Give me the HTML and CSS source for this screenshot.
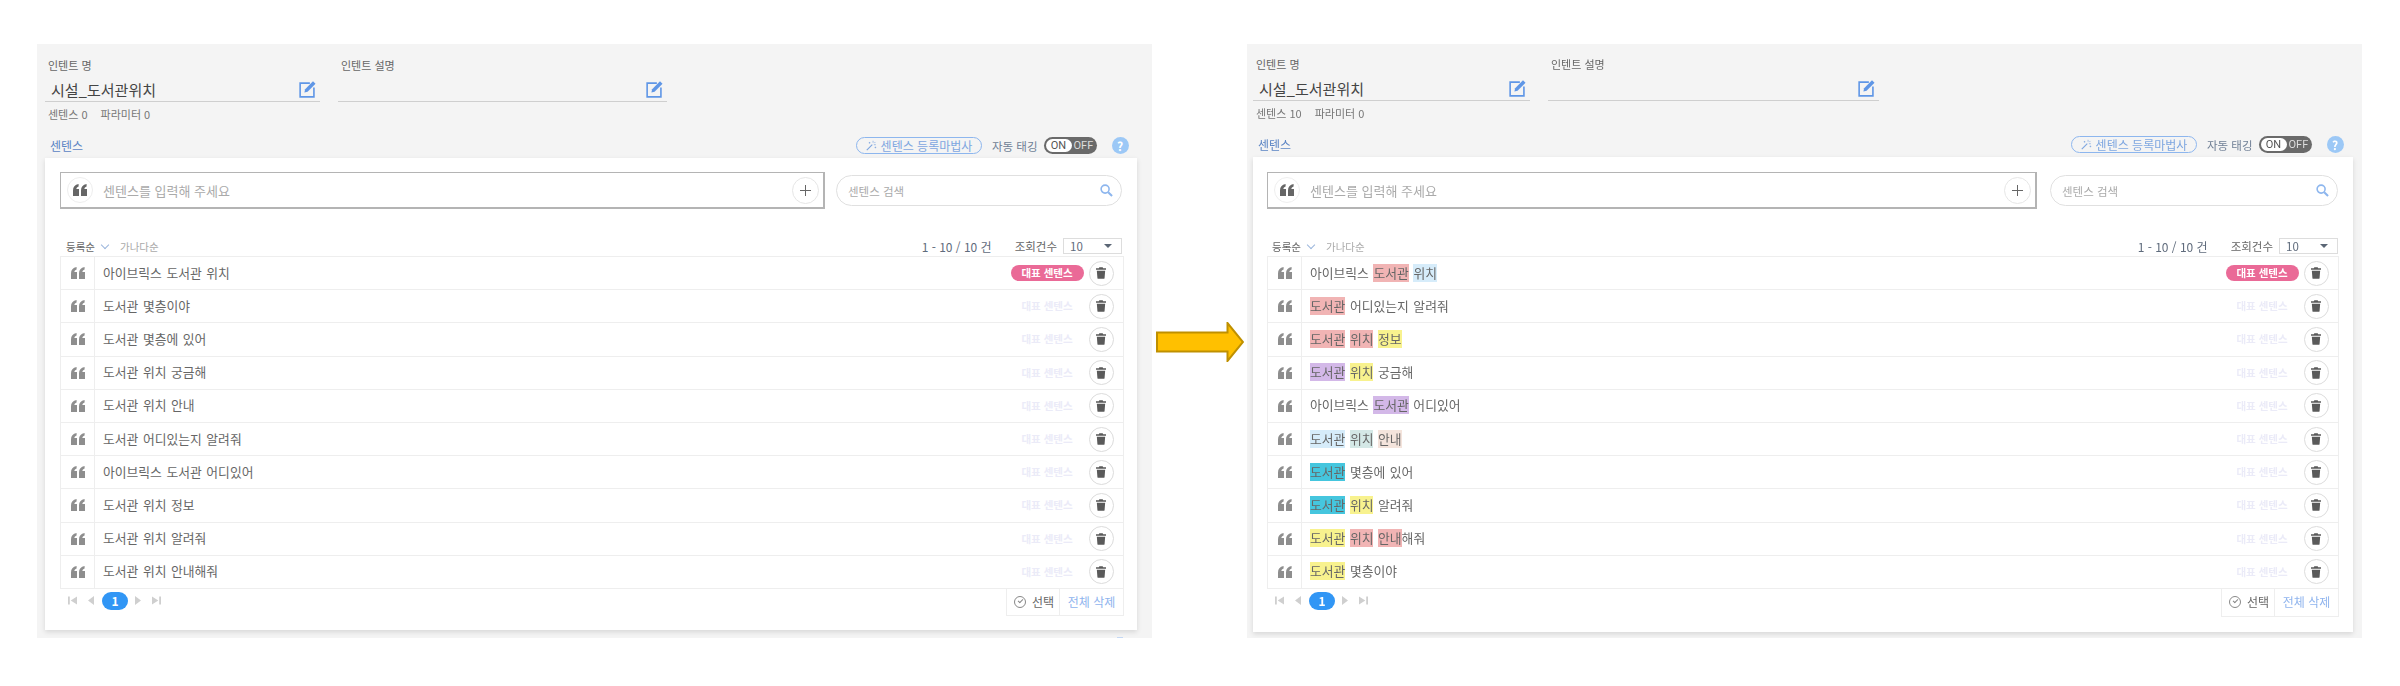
FILE: index.html
```html
<!DOCTYPE html>
<html lang="ko">
<head>
  <meta charset="UTF-8" />
  <title>인텐트 - 센텐스 태깅</title>
  <link rel="stylesheet" href="styles.css">
</head>
<body>
  <svg class="sprite" xmlns="http://www.w3.org/2000/svg">
    <symbol id="i-quote" viewBox="0 0 14 12"><path d="M0 12V6.500C0 3 1.800.8 5.600 0v2.600C4.200 3 3.500 3.900 3.400 5H6v7zM8 12V6.500C8 3 9.800.8 13.600 0v2.600c-1.400.4-2.100 1.300-2.200 2.400H14v7z"/></symbol>
    <symbol id="i-trash" viewBox="0 0 12 14"><path d="M4 0h4l.6 1.300H12v1.800H0V1.300h3.400zM1 4.200h10l-.7 8.700c0 .6-.5 1.100-1.100 1.100H2.800c-.6 0-1.100-.5-1.100-1.100z"/></symbol>
    <symbol id="i-edit" viewBox="0 0 18 18"><path d="M11.500 2.200H1.200v14.600h14.600V7" fill="none" stroke="currentColor" stroke-width="1.700"/><path d="M14.800.3l2.700 2.600-8.400 8.500-3.400.8.800-3.400z"/></symbol>
    <symbol id="i-first" viewBox="0 0 10 9"><path d="M0 0h2v9H0zM10 0v9L3 4.500z"/></symbol>
    <symbol id="i-prev" viewBox="0 0 6 9"><path d="M6 0v9L0 4.500z"/></symbol>
    <symbol id="i-search" viewBox="0 0 14 14"><circle cx="5.500" cy="5.500" r="4.300" fill="none" stroke="currentColor" stroke-width="1.700"/><path d="M8.800 8.800L13 13" stroke="currentColor" stroke-width="2.200" fill="none"/></symbol>
    <symbol id="i-wand" viewBox="0 0 14 14"><path d="M1 13L8 6" stroke="currentColor" stroke-width="1.400" fill="none"/><path d="M9 1v2.500M12.500 6H10M12 2.500L10.500 4M3.500 3.500h2M4.500 2.500v2M11 9.500h2M12 8.500v2" stroke="currentColor" stroke-width=".9" fill="none"/></symbol>
  </svg>

  <div class="page">
    <section class="panel panel-before">
      <div class="fields">
        <div class="field field-name">
          <label class="field-label">인텐트 명</label>
          <div class="field-line">
            <span class="field-value">시설_도서관위치</span>
            <svg class="edit-icon"><use href="#i-edit"/></svg>
          </div>
        </div>
        <div class="field field-desc">
          <label class="field-label">인텐트 설명</label>
          <div class="field-line">
            <span class="field-value"></span>
            <svg class="edit-icon"><use href="#i-edit"/></svg>
          </div>
        </div>
      </div>
      <div class="stats"><span>센텐스 0</span><span>파라미터 0</span></div>
      <div class="section-head">
        <h2>센텐스</h2>
        <div class="section-tools">
          <button class="wizard"><svg><use href="#i-wand"/></svg>센텐스 등록마법사</button>
          <span class="auto-label">자동 태깅</span>
          <span class="toggle"><b>ON</b><i>OFF</i></span>
          <span class="help">?</span>
        </div>
      </div>
      <div class="card">
        <div class="entry-row">
          <div class="entry">
            <span class="round round-quote"><svg><use href="#i-quote"/></svg></span>
            <span class="entry-text">센텐스를 입력해 주세요</span>
            <span class="round round-plus"></span>
          </div>
          <div class="search">
            <span>센텐스 검색</span>
            <svg><use href="#i-search"/></svg>
          </div>
        </div>
        <div class="list-tools">
          <div class="sort">
            <span class="sort-on">등록순</span><span class="chevron"></span><span class="sort-off">가나다순</span>
          </div>
          <div class="counts">
            <span class="count-range">1 - 10 / 10 건</span>
            <span class="count-label">조회건수</span>
            <span class="select">10<span class="caret"></span></span>
          </div>
        </div>
        <ul class="rows">
          <li class="row"><span class="row-icon"><svg><use href="#i-quote"/></svg></span><span class="row-text">아이브릭스 도서관 위치</span><span class="tag tag-on">대표 센텐스</span><span class="round round-trash"><svg><use href="#i-trash"/></svg></span></li>
          <li class="row"><span class="row-icon"><svg><use href="#i-quote"/></svg></span><span class="row-text">도서관 몇층이야</span><span class="tag">대표 센텐스</span><span class="round round-trash"><svg><use href="#i-trash"/></svg></span></li>
          <li class="row"><span class="row-icon"><svg><use href="#i-quote"/></svg></span><span class="row-text">도서관 몇층에 있어</span><span class="tag">대표 센텐스</span><span class="round round-trash"><svg><use href="#i-trash"/></svg></span></li>
          <li class="row"><span class="row-icon"><svg><use href="#i-quote"/></svg></span><span class="row-text">도서관 위치 궁금해</span><span class="tag">대표 센텐스</span><span class="round round-trash"><svg><use href="#i-trash"/></svg></span></li>
          <li class="row"><span class="row-icon"><svg><use href="#i-quote"/></svg></span><span class="row-text">도서관 위치 안내</span><span class="tag">대표 센텐스</span><span class="round round-trash"><svg><use href="#i-trash"/></svg></span></li>
          <li class="row"><span class="row-icon"><svg><use href="#i-quote"/></svg></span><span class="row-text">도서관 어디있는지 알려줘</span><span class="tag">대표 센텐스</span><span class="round round-trash"><svg><use href="#i-trash"/></svg></span></li>
          <li class="row"><span class="row-icon"><svg><use href="#i-quote"/></svg></span><span class="row-text">아이브릭스 도서관 어디있어</span><span class="tag">대표 센텐스</span><span class="round round-trash"><svg><use href="#i-trash"/></svg></span></li>
          <li class="row"><span class="row-icon"><svg><use href="#i-quote"/></svg></span><span class="row-text">도서관 위치 정보</span><span class="tag">대표 센텐스</span><span class="round round-trash"><svg><use href="#i-trash"/></svg></span></li>
          <li class="row"><span class="row-icon"><svg><use href="#i-quote"/></svg></span><span class="row-text">도서관 위치 알려줘</span><span class="tag">대표 센텐스</span><span class="round round-trash"><svg><use href="#i-trash"/></svg></span></li>
          <li class="row"><span class="row-icon"><svg><use href="#i-quote"/></svg></span><span class="row-text">도서관 위치 안내해줘</span><span class="tag">대표 센텐스</span><span class="round round-trash"><svg><use href="#i-trash"/></svg></span></li>
        </ul>
        <div class="list-foot">
          <div class="pager">
            <svg class="pg-end"><use href="#i-first"/></svg>
            <svg class="pg-step"><use href="#i-prev"/></svg>
            <span class="pg-num">1</span>
            <svg class="pg-step flip"><use href="#i-prev"/></svg>
            <svg class="pg-end flip"><use href="#i-first"/></svg>
          </div>
          <div class="foot-btns">
            <span class="foot-select"><span class="check"></span>선택</span>
            <span class="foot-delete">전체 삭제</span>
          </div>
        </div>
      </div>
      <span class="stray-mark"></span>
    </section>

    <div class="arrow-slot">
      <svg class="arrow" viewBox="0 0 88 40"><path d="M1 10.500H71.500V1L87 20 71.500 39V29.500H1z"/></svg>
    </div>

    <section class="panel panel-after">
      <div class="fields">
        <div class="field field-name">
          <label class="field-label">인텐트 명</label>
          <div class="field-line">
            <span class="field-value">시설_도서관위치</span>
            <svg class="edit-icon"><use href="#i-edit"/></svg>
          </div>
        </div>
        <div class="field field-desc">
          <label class="field-label">인텐트 설명</label>
          <div class="field-line">
            <span class="field-value"></span>
            <svg class="edit-icon"><use href="#i-edit"/></svg>
          </div>
        </div>
      </div>
      <div class="stats"><span>센텐스 10</span><span>파라미터 0</span></div>
      <div class="section-head">
        <h2>센텐스</h2>
        <div class="section-tools">
          <button class="wizard"><svg><use href="#i-wand"/></svg>센텐스 등록마법사</button>
          <span class="auto-label">자동 태깅</span>
          <span class="toggle"><b>ON</b><i>OFF</i></span>
          <span class="help">?</span>
        </div>
      </div>
      <div class="card">
        <div class="entry-row">
          <div class="entry">
            <span class="round round-quote"><svg><use href="#i-quote"/></svg></span>
            <span class="entry-text">센텐스를 입력해 주세요</span>
            <span class="round round-plus"></span>
          </div>
          <div class="search">
            <span>센텐스 검색</span>
            <svg><use href="#i-search"/></svg>
          </div>
        </div>
        <div class="list-tools">
          <div class="sort">
            <span class="sort-on">등록순</span><span class="chevron"></span><span class="sort-off">가나다순</span>
          </div>
          <div class="counts">
            <span class="count-range">1 - 10 / 10 건</span>
            <span class="count-label">조회건수</span>
            <span class="select">10<span class="caret"></span></span>
          </div>
        </div>
        <ul class="rows">
          <li class="row"><span class="row-icon"><svg><use href="#i-quote"/></svg></span><span class="row-text">아이브릭스 <mark class="hl-red">도서관</mark> <mark class="hl-sky">위치</mark></span><span class="tag tag-on">대표 센텐스</span><span class="round round-trash"><svg><use href="#i-trash"/></svg></span></li>
          <li class="row"><span class="row-icon"><svg><use href="#i-quote"/></svg></span><span class="row-text"><mark class="hl-red">도서관</mark> 어디있는지 알려줘</span><span class="tag">대표 센텐스</span><span class="round round-trash"><svg><use href="#i-trash"/></svg></span></li>
          <li class="row"><span class="row-icon"><svg><use href="#i-quote"/></svg></span><span class="row-text"><mark class="hl-red">도서관</mark> <mark class="hl-red">위치</mark> <mark class="hl-yellow">정보</mark></span><span class="tag">대표 센텐스</span><span class="round round-trash"><svg><use href="#i-trash"/></svg></span></li>
          <li class="row"><span class="row-icon"><svg><use href="#i-quote"/></svg></span><span class="row-text"><mark class="hl-purple">도서관</mark> <mark class="hl-yellow">위치</mark> 궁금해</span><span class="tag">대표 센텐스</span><span class="round round-trash"><svg><use href="#i-trash"/></svg></span></li>
          <li class="row"><span class="row-icon"><svg><use href="#i-quote"/></svg></span><span class="row-text">아이브릭스 <mark class="hl-purple">도서관</mark> 어디있어</span><span class="tag">대표 센텐스</span><span class="round round-trash"><svg><use href="#i-trash"/></svg></span></li>
          <li class="row"><span class="row-icon"><svg><use href="#i-quote"/></svg></span><span class="row-text"><mark class="hl-sky">도서관</mark> <mark class="hl-sage">위치</mark> <mark class="hl-beige">안내</mark></span><span class="tag">대표 센텐스</span><span class="round round-trash"><svg><use href="#i-trash"/></svg></span></li>
          <li class="row"><span class="row-icon"><svg><use href="#i-quote"/></svg></span><span class="row-text"><mark class="hl-cyan">도서관</mark> 몇층에 있어</span><span class="tag">대표 센텐스</span><span class="round round-trash"><svg><use href="#i-trash"/></svg></span></li>
          <li class="row"><span class="row-icon"><svg><use href="#i-quote"/></svg></span><span class="row-text"><mark class="hl-cyan">도서관</mark> <mark class="hl-yellow">위치</mark> 알려줘</span><span class="tag">대표 센텐스</span><span class="round round-trash"><svg><use href="#i-trash"/></svg></span></li>
          <li class="row"><span class="row-icon"><svg><use href="#i-quote"/></svg></span><span class="row-text"><mark class="hl-yellow">도서관</mark> <mark class="hl-red">위치</mark> <mark class="hl-red">안내</mark>해줘</span><span class="tag">대표 센텐스</span><span class="round round-trash"><svg><use href="#i-trash"/></svg></span></li>
          <li class="row"><span class="row-icon"><svg><use href="#i-quote"/></svg></span><span class="row-text"><mark class="hl-yellow">도서관</mark> 몇층이야</span><span class="tag">대표 센텐스</span><span class="round round-trash"><svg><use href="#i-trash"/></svg></span></li>
        </ul>
        <div class="list-foot">
          <div class="pager">
            <svg class="pg-end"><use href="#i-first"/></svg>
            <svg class="pg-step"><use href="#i-prev"/></svg>
            <span class="pg-num">1</span>
            <svg class="pg-step flip"><use href="#i-prev"/></svg>
            <svg class="pg-end flip"><use href="#i-first"/></svg>
          </div>
          <div class="foot-btns">
            <span class="foot-select"><span class="check"></span>선택</span>
            <span class="foot-delete">전체 삭제</span>
          </div>
        </div>
      </div>
    </section>
  </div>
</body>
</html>
```

FILE: styles.css
```css
/* Reset and base */
*, *::before, *::after {
  box-sizing: border-box;
}

body {
  font-family: "Noto Sans CJK KR", "Noto Sans", sans-serif;
  background-color: #ffffff;
  color: #666666;
  margin: 0;
  overflow: hidden;
}

.sprite {
  display: none;
}

.page {
  display: flex;
  align-items: flex-start;
  padding: 44px 0 0 37px;
  filter: blur(0.35px);
}

/* Panels */
.panel {
  position: relative;
  flex-shrink: 0;
  width: 1115px;
  height: 594px;
  background-color: #f4f4f4;
}

.panel-before {
  padding: 14px 15px 8px 8px;
}

.panel-after {
  padding: 13px 9px 6px 6px;
}

.arrow-slot {
  flex-shrink: 0;
  width: 95px;
  padding: 278px 0 0 4px;
}

.arrow {
  display: block;
  width: 88px;
  height: 40px;
  fill: #ffc000;
  stroke: #bf9000;
  stroke-width: 2;
}

.stray-mark {
  position: absolute;
  left: 1080px;
  bottom: 0;
  width: 6px;
  height: 1px;
  background-color: #c4d8f4;
}

/* Intent fields */
.fields {
  display: flex;
  gap: 18px;
}

.field-name {
  width: 275px;
}

.field-desc {
  width: 329px;
}

.panel-after .field-name {
  width: 277px;
}

.panel-after .field-desc {
  width: 331px;
}

.field-label {
  display: block;
  padding-left: 3px;
  font-size: 11px;
  line-height: 14px;
  color: #666;
}

.field-line {
  display: flex;
  justify-content: space-between;
  align-items: center;
  height: 24px;
  margin-top: 6px;
  padding: 0 4px 0 6px;
  border-bottom: 1px solid #cfcfcf;
}

.field-value {
  font-size: 15px;
  color: #444;
}

.edit-icon {
  width: 17px;
  height: 17px;
  color: #5f96e6;
  fill: #5f96e6;
}

.stats {
  display: flex;
  gap: 13px;
  margin-top: 5px;
  padding-left: 3px;
  font-size: 11px;
  line-height: 14px;
  color: #777;
}

/* Section head */
.section-head {
  display: flex;
  justify-content: space-between;
  align-items: flex-end;
  height: 17px;
  margin: 16px 0 4px;
  padding: 0 8.500px 0 5px;
}

.panel-after .section-head {
  padding-right: 9.500px;
}

.section-head h2 {
  margin: 0;
  font-size: 12px;
  font-weight: 400;
  line-height: 17px;
  color: #5b84c4;
}

.section-tools {
  display: flex;
  align-items: center;
  height: 17px;
}

.wizard {
  display: flex;
  align-items: center;
  justify-content: center;
  gap: 4px;
  width: 126px;
  height: 17px;
  padding: 0;
  border: 1px solid #8db6ee;
  border-radius: 9px;
  background-color: transparent;
  font-family: inherit;
  font-size: 12px;
  color: #7ea6e0;
}

.wizard svg {
  width: 11px;
  height: 11px;
  color: #7ea6e0;
}

.auto-label {
  margin-left: 10px;
  font-size: 11.500px;
  color: #6f7f95;
}

.toggle {
  display: flex;
  align-items: center;
  flex-shrink: 0;
  width: 53px;
  height: 17px;
  margin-left: 6px;
  padding: 0 2px;
  border-radius: 9px;
  background-color: #6a6a6a;
  font-family: "Roboto", sans-serif;
  font-size: 11px;
}

.toggle b {
  width: 26px;
  height: 13px;
  border-radius: 7px;
  background-color: #fff;
  color: #555;
  font-weight: 400;
  line-height: 13px;
  text-align: center;
}

.toggle i {
  margin-left: 2px;
  font-style: normal;
  color: #ddd;
}

.help {
  flex-shrink: 0;
  width: 17px;
  height: 17px;
  margin-left: 15px;
  border-radius: 50%;
  background-color: #9cc8f6;
  color: #fff;
  font-size: 12px;
  font-weight: 700;
  line-height: 17px;
  text-align: center;
}

/* White card */
.card {
  height: 472px;
  padding: 14px 13px 15px 15px;
  background-color: #fff;
  box-shadow: 0 2px 5px rgba(0,0,0,0.12);
}

.panel-after .card {
  height: 475px;
  padding: 15px 14px 15px 14px;
}

.round {
  display: flex;
  flex-shrink: 0;
  align-items: center;
  justify-content: center;
  border: 1px solid #dcdcdc;
  border-radius: 50%;
  background-color: #fff;
}

.entry-row {
  display: flex;
  align-items: center;
  gap: 11px;
  height: 37px;
  padding-right: 2px;
}

.panel-after .entry-row {
  gap: 13px;
  padding-right: 1px;
}

.entry {
  display: flex;
  flex: 1;
  align-items: center;
  height: 37px;
  padding: 0 4px 0 6px;
  border: 1px solid #b4b4b4;
  border-width: 1px 2px 2px 1px;
}

.entry-text {
  flex: 1;
  margin-left: 10px;
  font-size: 13px;
  color: #aaa;
}

.round-quote {
  width: 26px;
  height: 26px;
  border-color: #eeeeee;
}

.round-quote svg {
  width: 14px;
  height: 12px;
  fill: #666;
}

.round-plus {
  position: relative;
  width: 27px;
  height: 27px;
  border-color: #e6e6e6;
}

.round-plus::before,
.round-plus::after {
  content: "";
  position: absolute;
  background-color: #666;
}

.round-plus::before {
  left: 7px;
  top: 12px;
  width: 11px;
  height: 1.400px;
}

.round-plus::after {
  left: 12px;
  top: 7px;
  width: 1.400px;
  height: 11px;
}

.search {
  display: flex;
  justify-content: space-between;
  align-items: center;
  width: 286px;
  height: 31px;
  padding: 0 8px 0 11px;
  border: 1px solid #e0e0e0;
  border-radius: 16px;
  font-size: 11.500px;
  color: #aaa;
}

.panel-after .search {
  width: 288px;
}

.search svg {
  width: 13px;
  height: 13px;
  color: #8db6ee;
}

/* List toolbar */
.list-tools {
  display: flex;
  justify-content: space-between;
  align-items: center;
  height: 16px;
  margin: 29px 0 2px;
  padding: 0 2px 0 6px;
}

.panel-after .list-tools {
  padding: 0 1px 0 5px;
}

.sort {
  display: flex;
  align-items: center;
  font-size: 10.500px;
}

.sort-on {
  color: #666;
}

.sort-off {
  color: #aaa;
}

.chevron {
  width: 6px;
  height: 6px;
  margin: -3px 12px 0 7px;
  border: solid #9bb6dc;
  border-width: 0 1px 1px 0;
  transform: rotate(45deg);
}

.counts {
  display: flex;
  align-items: center;
  font-size: 11.500px;
}

.count-range {
  font-size: 12px;
  color: #5f6b7c;
}

.count-label {
  margin: 0 6px 0 23px;
  color: #666;
}

.select {
  position: relative;
  width: 59px;
  height: 16px;
  padding-left: 6px;
  border: 1px solid #ddd;
  color: #5f6b7c;
  line-height: 14px;
}

.caret {
  position: absolute;
  right: 9px;
  top: 5px;
  border: solid transparent;
  border-width: 4px 4px 0;
  border-top-color: #5b6675;
}

/* Sentence rows */
.rows {
  margin: 0;
  padding: 0;
  list-style: none;
  border: 1px solid #eeeeee;
  border-bottom: 0;
}

.row {
  display: flex;
  align-items: center;
  height: 33.200px;
  padding-right: 9.500px;
  border-bottom: 1px solid #eeeeee;
}

.row-icon {
  display: flex;
  align-items: center;
  justify-content: center;
  align-self: stretch;
  width: 34px;
  border-right: 1px solid #eeeeee;
}

.row-icon svg {
  width: 14px;
  height: 12px;
  fill: #8e8e8e;
}

.row-text {
  flex: 1;
  padding: 0 0 1px 8px;
  font-size: 12.800px;
  word-spacing: 1px;
  line-height: 18px;
  color: #666;
}

.row-text mark {
  display: inline-block;
  height: 18px;
  color: #666;
  line-height: 18px;
  vertical-align: top;
}

.hl-red { background-color: #f1b4b4; }
.hl-sky { background-color: #d6ecfa; }
.hl-yellow { background-color: #f8f28e; }
.hl-purple { background-color: #d3b8e8; }
.hl-sage { background-color: #d4e8e6; }
.hl-beige { background-color: #f4e4dc; }
.hl-cyan { background-color: #45c6de; }

.tag {
  width: 73px;
  height: 16px;
  margin-right: 5px;
  border-radius: 8px;
  font-size: 10.500px;
  font-weight: 700;
  line-height: 16px;
  text-align: center;
  color: #ebebf8;
}

.tag-on {
  background-color: #ea6a97;
  color: #fff;
}

.round-trash {
  width: 25px;
  height: 25px;
}

.round-trash svg {
  width: 10px;
  height: 12px;
  fill: #5a5a5a;
}

/* List foot */
.list-foot {
  display: flex;
  justify-content: space-between;
  height: 27px;
}

.panel-after .list-foot {
  height: 28px;
}

.pager {
  display: flex;
  align-items: center;
  height: 20px;
  padding: 4px 0 0 8px;
}

.pg-end {
  width: 9px;
  height: 9px;
  fill: #cfcfcf;
}

.pg-step {
  width: 6px;
  height: 9px;
  margin-left: 11px;
  fill: #cfcfcf;
}

.pg-step.flip {
  margin: 0 11px 0 7px;
}

.flip {
  transform: scaleX(-1);
}

.pg-num {
  width: 26px;
  height: 18px;
  margin-left: 8px;
  border-radius: 9px;
  background-color: #3196f5;
  color: #fff;
  font-size: 12px;
  font-weight: 700;
  line-height: 18px;
  text-align: center;
}

.foot-btns {
  display: flex;
  border: 1px solid #eeeeee;
  border-top: 0;
  font-size: 12px;
  line-height: 26px;
}

.foot-select {
  display: flex;
  align-items: center;
  width: 53px;
  padding-left: 7px;
  border-right: 1px solid #eeeeee;
  color: #666;
}

.check {
  position: relative;
  width: 12px;
  height: 12px;
  margin-right: 6px;
  border: 1px solid #888;
  border-radius: 50%;
}

.check::after {
  content: "";
  position: absolute;
  left: 3px;
  top: 2px;
  width: 5px;
  height: 3px;
  border: solid #888;
  border-width: 0 0 1px 1px;
  transform: rotate(-45deg);
}

.foot-delete {
  width: 63px;
  text-align: center;
  color: #8fb4ee;
}
```
